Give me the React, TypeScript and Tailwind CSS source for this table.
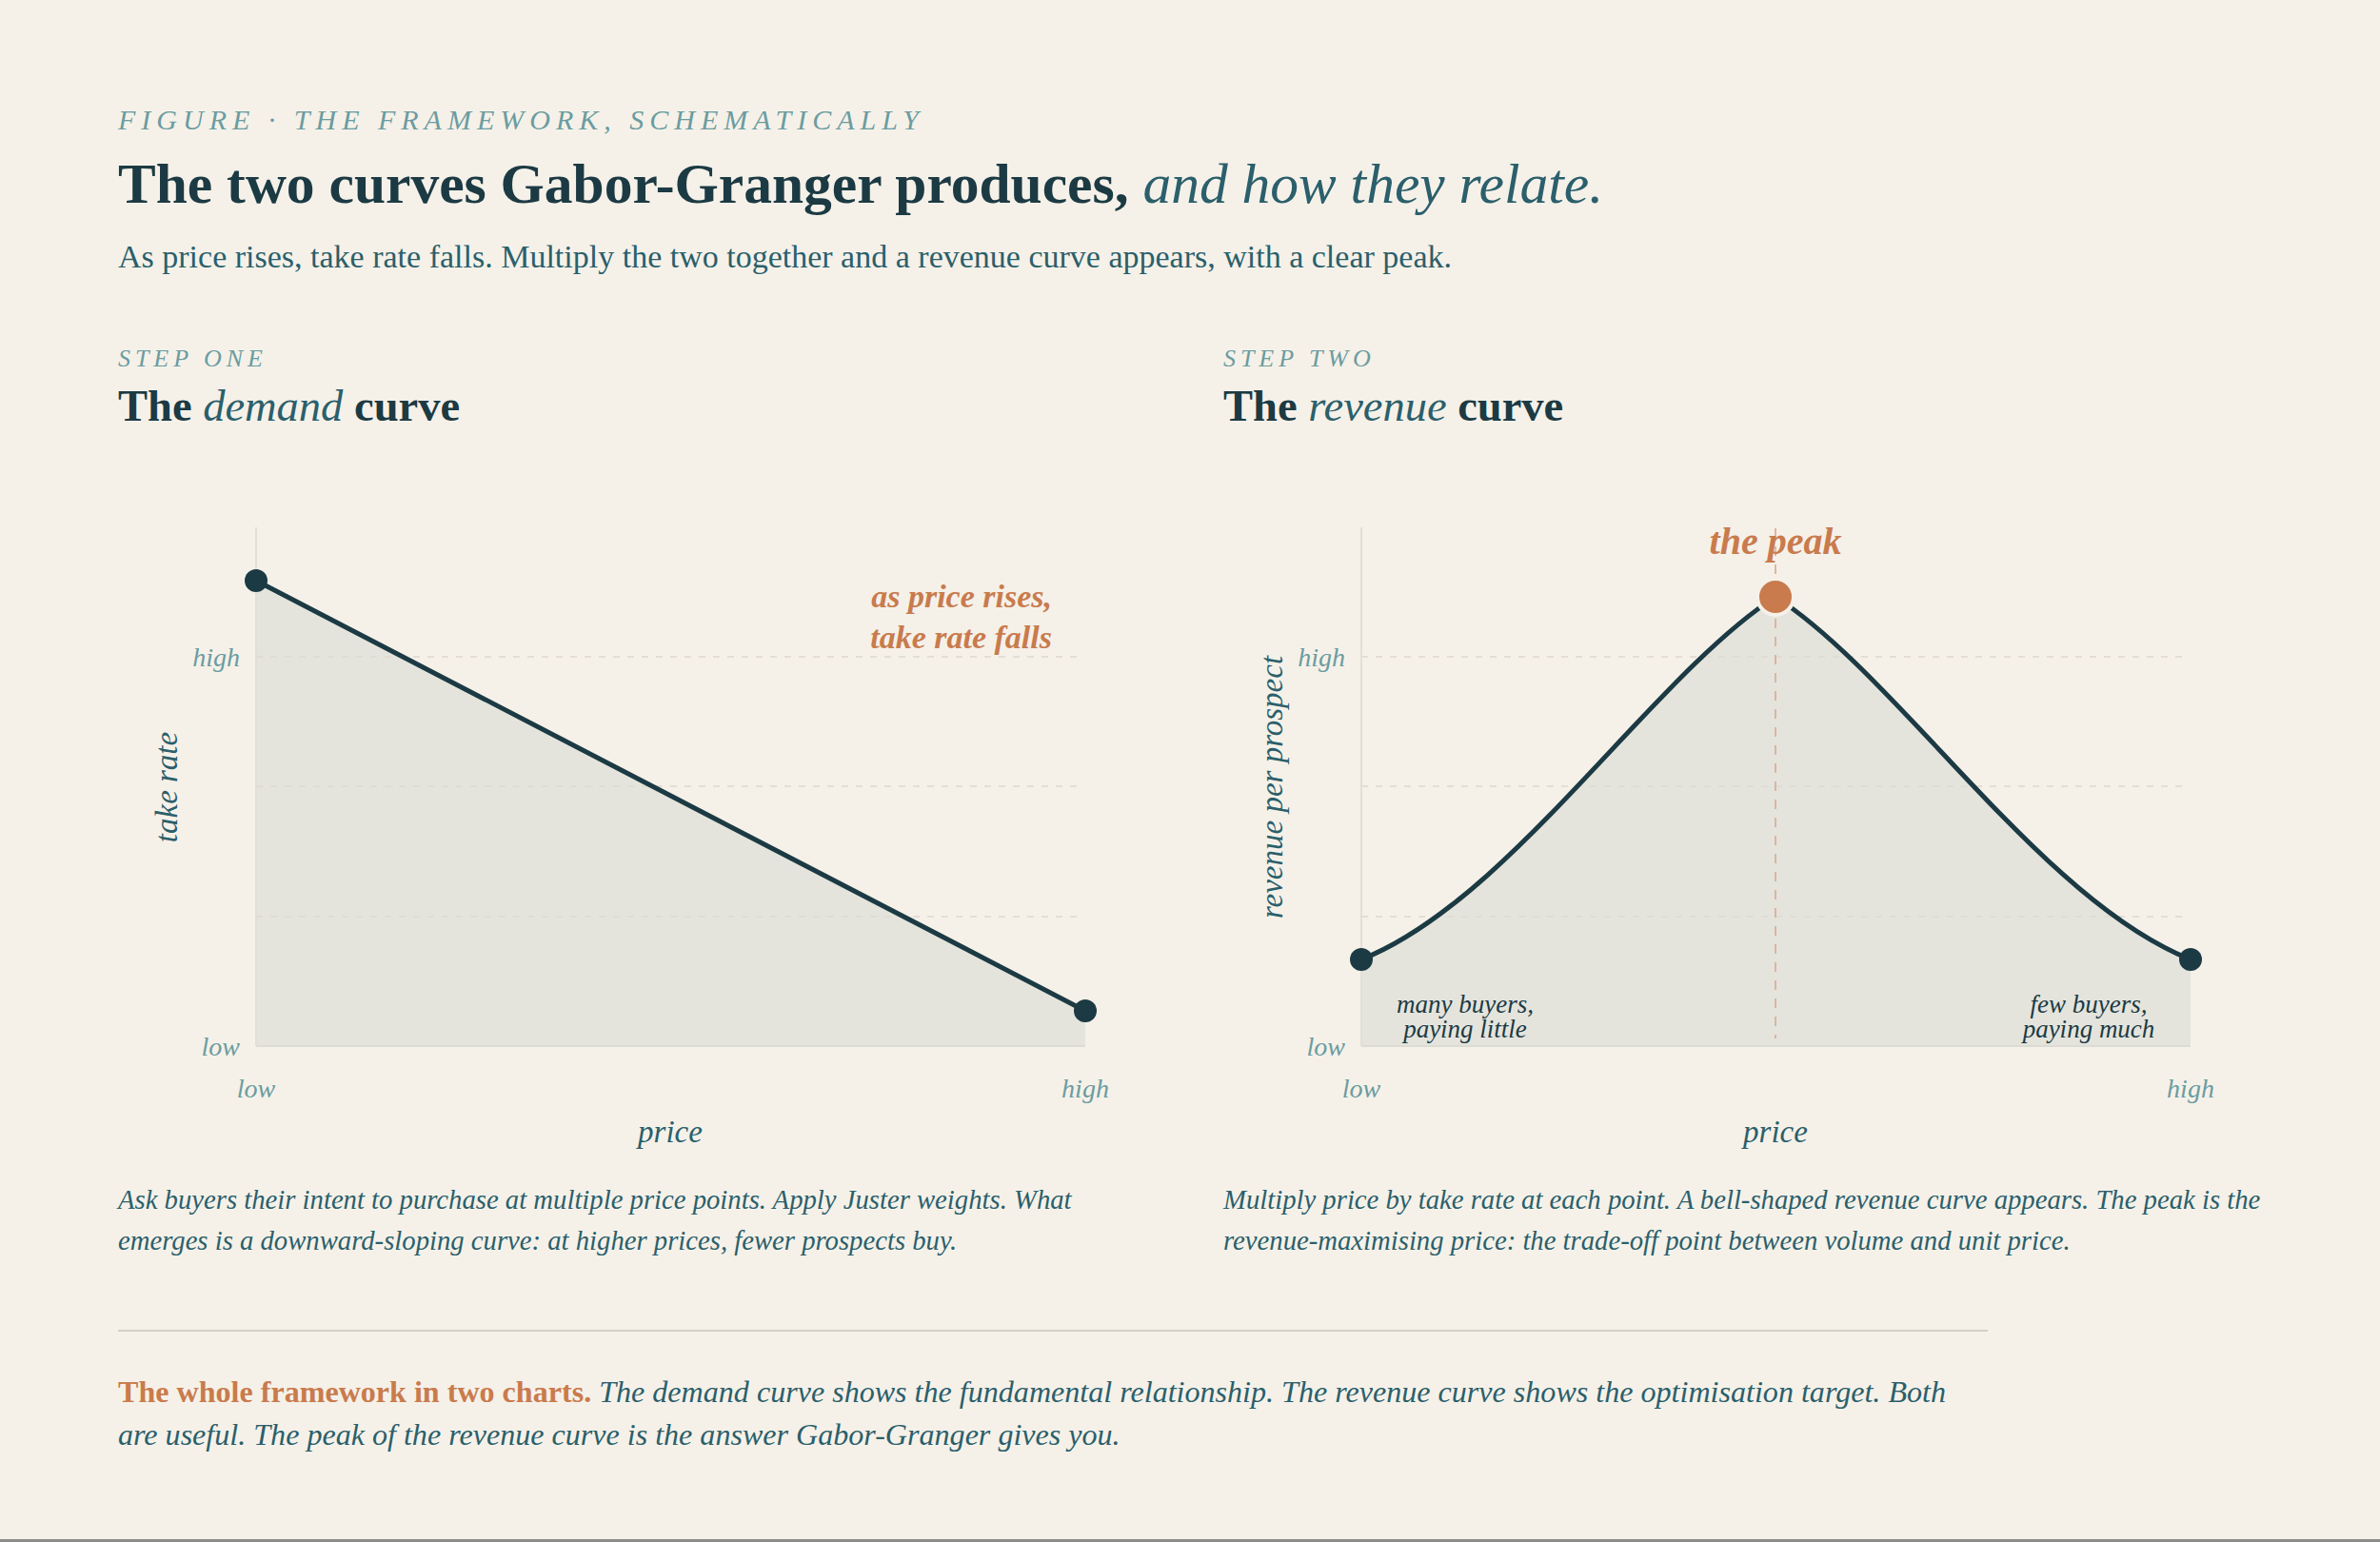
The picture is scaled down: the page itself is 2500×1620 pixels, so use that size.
import { FC, ReactNode } from 'react';

const serif = '"Liberation Serif", "Times New Roman", serif';

const X0 = 145;
const X1 = 1016;
const TOP = 75;
const BOT = 620;
const GRID = [211, 347, 484];

const INK = '#1c3a43';
const ACCENT = '#2b5f6b';
const MUTED = '#6b9ca0';
const ORANGE = '#c97b4d';

interface PlotFrameProps {
  yTitle: string;
  area: ReactNode;
  children: ReactNode;
}

// shared axes, grid, tick labels and titles for both charts
const PlotFrame: FC<PlotFrameProps> = ({ yTitle, area, children }) => (
  <svg width={1091} height={740} viewBox="0 0 1091 740" className="block" fontFamily={serif}>
    {area}
    <line x1={X0} x2={X0} y1={TOP} y2={BOT} stroke="#e3dfd7" strokeWidth={2} />
    <line x1={X0} x2={X1} y1={BOT} y2={BOT} stroke="#dddcd4" strokeWidth={2} />
    {GRID.map((y) => (
      <line key={y} x1={X0} x2={1008} y1={y} y2={y} stroke="#dedad1" strokeOpacity={0.8} strokeWidth={2} strokeDasharray="7 8" />
    ))}
    {children}
    <text x={128} y={221} textAnchor="end" fontSize={28} fontStyle="italic" fill={MUTED}>
      high
    </text>
    <text x={128} y={630} textAnchor="end" fontSize={28} fontStyle="italic" fill={MUTED}>
      low
    </text>
    <text x={X0} y={674} textAnchor="middle" fontSize={28} fontStyle="italic" fill={MUTED}>
      low
    </text>
    <text x={X1} y={674} textAnchor="middle" fontSize={28} fontStyle="italic" fill={MUTED}>
      high
    </text>
    <text x={580} y={721} textAnchor="middle" fontSize={33} fontStyle="italic" fill={ACCENT}>
      price
    </text>
    <text
      x={54}
      y={348}
      textAnchor="middle"
      dominantBaseline="middle"
      transform="rotate(-90 54 348)"
      fontSize={33}
      fontStyle="italic"
      fill={ACCENT}
    >
      {yTitle}
    </text>
  </svg>
);

const DemandChart: FC = () => (
  <PlotFrame
    yTitle="take rate"
    area={<polygon points={`${X0},131 ${X1},583 ${X1},${BOT} ${X0},${BOT}`} fill="#e4e4dd" />}
  >
    <line x1={X0} y1={131} x2={X1} y2={583} stroke={INK} strokeWidth={5} strokeLinecap="round" />
    <circle cx={X0} cy={131} r={12} fill={INK} />
    <circle cx={X1} cy={583} r={12} fill={INK} />
    <text x={981} y={159} textAnchor="end" fontSize={34} fontWeight="bold" fontStyle="italic" fill={ORANGE}>
      as price rises,
    </text>
    <text x={981} y={202} textAnchor="end" fontSize={34} fontWeight="bold" fontStyle="italic" fill={ORANGE}>
      take rate falls
    </text>
  </PlotFrame>
);

const curve = `M${X0},529 C300,468 450,232 580,148 C710,232 860,468 ${X1},529`;

const RevenueChart: FC = () => (
  <PlotFrame
    yTitle="revenue per prospect"
    area={<path d={`${curve} L${X1},${BOT} L${X0},${BOT} Z`} fill="#e4e4dd" />}
  >
    <line x1={580} x2={580} y1={76} y2={612} stroke="#d9a98b" strokeOpacity={0.8} strokeWidth={2} strokeDasharray="10 9" />
    <path d={curve} fill="none" stroke={INK} strokeWidth={5} strokeLinecap="round" />
    <circle cx={X0} cy={529} r={12} fill={INK} />
    <circle cx={X1} cy={529} r={12} fill={INK} />
    <circle cx={580} cy={148} r={19} fill={ORANGE} stroke="#f5f1e9" strokeWidth={4} />
    <text x={580} y={103} textAnchor="middle" fontSize={40} fontWeight="bold" fontStyle="italic" fill={ORANGE}>
      the peak
    </text>
    <text textAnchor="middle" fontSize={27} fontStyle="italic" fill={INK}>
      <tspan x={254} y={585}>many buyers,</tspan>
      <tspan x={254} y={611}>paying little</tspan>
    </text>
    <text textAnchor="middle" fontSize={27} fontStyle="italic" fill={INK}>
      <tspan x={909} y={585}>few buyers,</tspan>
      <tspan x={909} y={611}>paying much</tspan>
    </text>
  </PlotFrame>
);

interface StepProps {
  step: string;
  word: string;
  chart: ReactNode;
  text: string;
}

const Step: FC<StepProps> = ({ step, word, chart, text }) => (
  <div className="flex flex-col">
    <div className="text-[26px] leading-[32px] italic tracking-[0.19em] text-[#6b9ca0]">{step}</div>
    <h2 className="mt-[6px] text-[46.5px] leading-[56px] font-bold text-[#1c3a43]">
      The <span className="font-normal italic text-[#2b5f6b]">{word}</span> curve
    </h2>
    <div className="mt-[24px]">{chart}</div>
    <p className="mt-[20px] text-[28.7px] leading-[43px] italic text-[#2b5f6b]">{text}</p>
  </div>
);

export default function App() {
  return (
    <div
      className="h-[1620px] w-full box-border border-b-[3px] border-[#8b8b88] bg-[#f5f1e9] px-[124px] pt-[108px]"
      style={{ fontFamily: serif }}
    >
      <div className="text-[30px] leading-[36px] italic tracking-[0.2em] text-[#6b9ca0]">
        FIGURE · THE FRAMEWORK, SCHEMATICALLY
      </div>
      <h1 className="mt-[14px] text-[59.5px] leading-[70px] font-bold text-[#1c3a43]">
        The two curves Gabor-Granger produces,{' '}
        <span className="font-normal italic text-[#2b5f6b]">and how they relate.</span>
      </h1>
      <p className="mt-[20px] text-[34px] leading-[44px] text-[#2b5f6b]">
        As price rises, take rate falls. Multiply the two together and a revenue curve appears, with a clear
        peak.
      </p>

      <div className="mt-[69px] grid grid-cols-[1091px_1091px] gap-x-[70px]">
        <Step
          step="STEP ONE"
          word="demand"
          chart={<DemandChart />}
          text="Ask buyers their intent to purchase at multiple price points. Apply Juster weights. What emerges is a downward-sloping curve: at higher prices, fewer prospects buy."
        />
        <Step
          step="STEP TWO"
          word="revenue"
          chart={<RevenueChart />}
          text="Multiply price by take rate at each point. A bell-shaped revenue curve appears. The peak is the revenue-maximising price: the trade-off point between volume and unit price."
        />
      </div>

      <div className="mt-[72px] max-w-[1964px] border-t-2 border-[#d3d0c8]" />
      <p className="mt-[41px] max-w-[1964px] text-[32.1px] leading-[45px] italic text-[#2b5f6b]">
        <span className="font-bold not-italic text-[#c97b4d]">The whole framework in two charts.</span> The demand
        curve shows the fundamental relationship. The revenue curve shows the optimisation target. Both are useful.
        The peak of the revenue curve is the answer Gabor-Granger gives you.
      </p>
    </div>
  );
}
